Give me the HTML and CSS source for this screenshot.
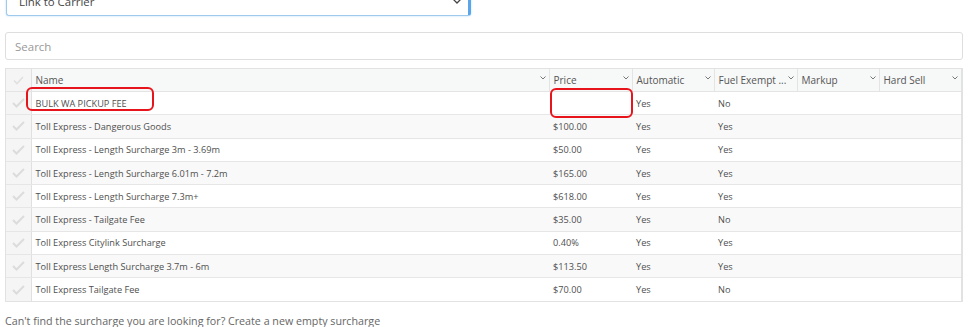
FILE: index.html
```html
<!DOCTYPE html>
<html>
<head>
<meta charset="utf-8">
<link rel="stylesheet" href="styles.css">
</head>
<body>
<div class="page">
  <div class="select">
    <span class="select-text">Link to Carrier</span>
    <svg class="select-chev" width="10" height="6" viewBox="0 0 10 6"><path d="M1 1l4 4 4-4" fill="none" stroke="#444" stroke-width="1.3"/></svg>
  </div>
  <div class="search">Search</div>
  <div class="table-wrap">
    <table class="grid">
      <colgroup>
        <col class="c-check"><col class="c-name"><col class="c-price"><col class="c-auto"><col class="c-fuel"><col class="c-markup"><col class="c-hard">
      </colgroup>
      <thead>
        <tr>
          <th class="check"><svg class="tick" width="11" height="9" viewBox="0 0 11 9"><path d="M1 4.5l3 3 6-6.5" fill="none" stroke="#e0e0e0" stroke-width="1.6"/></svg></th>
          <th><div class="hcell"><span>Name</span><svg class="chev" width="6" height="4" viewBox="0 0 6 4"><path d="M0.5 0.5l2.5 2.5 2.5-2.5" fill="none" stroke="#777" stroke-width="1"/></svg></div></th>
          <th><div class="hcell"><span>Price</span><svg class="chev" width="6" height="4" viewBox="0 0 6 4"><path d="M0.5 0.5l2.5 2.5 2.5-2.5" fill="none" stroke="#777" stroke-width="1"/></svg></div></th>
          <th><div class="hcell"><span>Automatic</span><svg class="chev" width="6" height="4" viewBox="0 0 6 4"><path d="M0.5 0.5l2.5 2.5 2.5-2.5" fill="none" stroke="#777" stroke-width="1"/></svg></div></th>
          <th><div class="hcell"><span>Fuel Exempt ...</span><svg class="chev" width="6" height="4" viewBox="0 0 6 4"><path d="M0.5 0.5l2.5 2.5 2.5-2.5" fill="none" stroke="#777" stroke-width="1"/></svg></div></th>
          <th><div class="hcell"><span>Markup</span><svg class="chev" width="6" height="4" viewBox="0 0 6 4"><path d="M0.5 0.5l2.5 2.5 2.5-2.5" fill="none" stroke="#777" stroke-width="1"/></svg></div></th>
          <th><div class="hcell"><span>Hard Sell</span><svg class="chev" width="6" height="4" viewBox="0 0 6 4"><path d="M0.5 0.5l2.5 2.5 2.5-2.5" fill="none" stroke="#777" stroke-width="1"/></svg></div></th>
        </tr>
      </thead>
      <tbody>
        <tr><td class="check"><svg class="tick" width="13" height="10" viewBox="0 0 13 10"><path d="M1 5l3.5 3.5 7.5-7.5" fill="none" stroke="#dcdcdc" stroke-width="2"/></svg></td><td>BULK WA PICKUP FEE</td><td></td><td>Yes</td><td>No</td><td></td><td></td></tr>
        <tr><td class="check"><svg class="tick" width="13" height="10" viewBox="0 0 13 10"><path d="M1 5l3.5 3.5 7.5-7.5" fill="none" stroke="#dcdcdc" stroke-width="2"/></svg></td><td>Toll Express - Dangerous Goods</td><td>$100.00</td><td>Yes</td><td>Yes</td><td></td><td></td></tr>
        <tr><td class="check"><svg class="tick" width="13" height="10" viewBox="0 0 13 10"><path d="M1 5l3.5 3.5 7.5-7.5" fill="none" stroke="#dcdcdc" stroke-width="2"/></svg></td><td>Toll Express - Length Surcharge 3m - 3.69m</td><td>$50.00</td><td>Yes</td><td>Yes</td><td></td><td></td></tr>
        <tr><td class="check"><svg class="tick" width="13" height="10" viewBox="0 0 13 10"><path d="M1 5l3.5 3.5 7.5-7.5" fill="none" stroke="#dcdcdc" stroke-width="2"/></svg></td><td>Toll Express - Length Surcharge 6.01m - 7.2m</td><td>$165.00</td><td>Yes</td><td>Yes</td><td></td><td></td></tr>
        <tr><td class="check"><svg class="tick" width="13" height="10" viewBox="0 0 13 10"><path d="M1 5l3.5 3.5 7.5-7.5" fill="none" stroke="#dcdcdc" stroke-width="2"/></svg></td><td>Toll Express - Length Surcharge 7.3m+</td><td>$618.00</td><td>Yes</td><td>Yes</td><td></td><td></td></tr>
        <tr><td class="check"><svg class="tick" width="13" height="10" viewBox="0 0 13 10"><path d="M1 5l3.5 3.5 7.5-7.5" fill="none" stroke="#dcdcdc" stroke-width="2"/></svg></td><td>Toll Express - Tailgate Fee</td><td>$35.00</td><td>Yes</td><td>No</td><td></td><td></td></tr>
        <tr><td class="check"><svg class="tick" width="13" height="10" viewBox="0 0 13 10"><path d="M1 5l3.5 3.5 7.5-7.5" fill="none" stroke="#dcdcdc" stroke-width="2"/></svg></td><td>Toll Express Citylink Surcharge</td><td>0.40%</td><td>Yes</td><td>Yes</td><td></td><td></td></tr>
        <tr><td class="check"><svg class="tick" width="13" height="10" viewBox="0 0 13 10"><path d="M1 5l3.5 3.5 7.5-7.5" fill="none" stroke="#dcdcdc" stroke-width="2"/></svg></td><td>Toll Express Length Surcharge 3.7m - 6m</td><td>$113.50</td><td>Yes</td><td>Yes</td><td></td><td></td></tr>
        <tr><td class="check"><svg class="tick" width="13" height="10" viewBox="0 0 13 10"><path d="M1 5l3.5 3.5 7.5-7.5" fill="none" stroke="#dcdcdc" stroke-width="2"/></svg></td><td>Toll Express Tailgate Fee</td><td>$70.00</td><td>Yes</td><td>No</td><td></td><td></td></tr>
      </tbody>
    </table>
    <div class="mark mark-name"></div>
    <div class="mark mark-price"></div>
  </div>
  <p class="footer-note">Can't find the surcharge you are looking for? Create a new empty surcharge</p>
</div>
</body>
</html>
```

FILE: styles.css
```css
html, body {
  margin: 0;
  padding: 0;
  background: #fff;
}
body {
  font-family: "Open Sans", "Noto Sans", sans-serif;
  color: #555;
}
.page {
  padding-left: 5px;
  width: 958px;
}
.select {
  box-sizing: border-box;
  margin-top: -15px;
  margin-left: 1px;
  width: 465px;
  height: 31px;
  border: 1px solid #9ecaed;
  border-right: 3px solid #5aa6e8;
  border-radius: 3px;
  box-shadow: 0 0 2px rgba(102, 175, 233, 0.5);
  display: flex;
  align-items: center;
  justify-content: space-between;
  padding: 0 6px 0 12px;
  font-size: 11.4px;
  color: #444;
}
.select-text {
  position: relative;
  top: 1px;
}
.search {
  box-sizing: border-box;
  margin-top: 16px;
  height: 28px;
  border: 1px solid #dedede;
  border-radius: 3px;
  padding: 0 9px;
  display: flex;
  align-items: center;
  font-size: 11.5px;
  color: #999;
}
.table-wrap {
  position: relative;
  margin-top: 8px;
  border: 1px solid #e2e2e2;
  border-right-width: 2px;
}
.grid {
  width: 100%;
  border-collapse: collapse;
  table-layout: fixed;
  font-size: 9.2px;
  color: #4f4f4f;
}
.c-check { width: 25px; }
.c-name { width: 518px; }
.c-price { width: 83px; }
.c-auto { width: 82px; }
.c-fuel { width: 83px; }
.c-markup { width: 82px; }
.c-hard { width: 82px; }
.grid th {
  height: 22px;
  padding: 0 3px 0 4px;
  background: #f7f8f8;
  border-right: 1px solid #e4e4e4;
  border-bottom: 1px solid #e4e4e4;
  text-align: left;
  font-weight: normal;
  font-size: 10px;
  color: #555;
  white-space: nowrap;
  overflow: hidden;
}
.grid th:last-child { border-right: none; }
.hcell {
  display: flex;
  align-items: center;
  justify-content: space-between;
}
.chev {
  flex: none;
  position: relative;
  top: -2px;
}
.grid td {
  height: 22.3px;
  padding: 0 4px;
  border-bottom: 1px solid #e6e6e6;
  white-space: nowrap;
  overflow: hidden;
}
.grid tbody tr:last-child td { border-bottom: none; }
.grid tbody tr:nth-child(even) td { background: #f9f9f9; }
.grid .check {
  background: #f5f5f5 !important;
  border-right: 1px solid #e0e0e0;
  text-align: center;
  padding: 0;
}
.tick { display: block; margin: 0 auto; }
.mark {
  position: absolute;
  border: 2px solid #e8141b;
  border-radius: 6px;
}
.mark-name {
  left: 20px;
  top: 18px;
  width: 124px;
  height: 20px;
}
.mark-price {
  left: 544px;
  top: 19px;
  width: 79px;
  height: 26px;
}
.footer-note {
  margin: 12px 0 0 0;
  font-size: 10.7px;
  color: #666;
}
```
